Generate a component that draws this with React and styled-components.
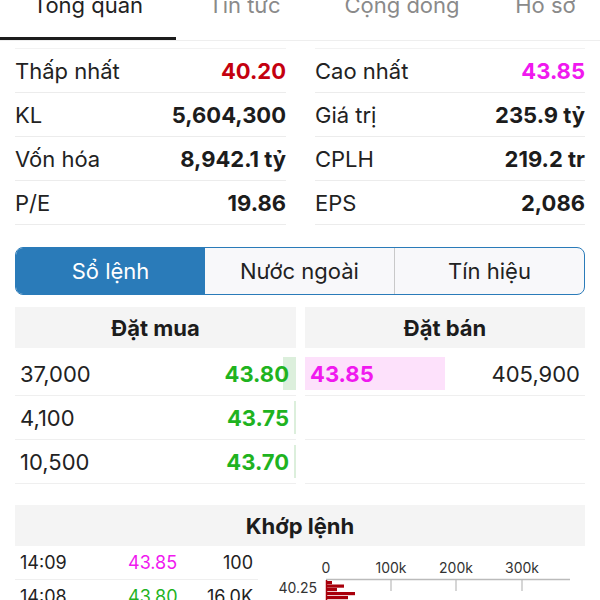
import React from 'react'
import styled, { createGlobalStyle } from 'styled-components'

const Global = createGlobalStyle`
  body { margin: 0; background: #fff; font-family: Inter, "Liberation Sans", sans-serif; color: #222; }
  * { box-sizing: border-box; }
`

const tabs = [
  { label: 'Tổng quan', w: 176, active: true },
  { label: 'Tin tức', w: 137 },
  { label: 'Cộng đồng', w: 178 },
  { label: 'Hồ sơ', w: 109 },
]

const stats = [
  [
    { k: 'Thấp nhất', v: '40.20', c: '#c4000f' },
    { k: 'KL', v: '5,604,300' },
    { k: 'Vốn hóa', v: '8,942.1 tỷ' },
    { k: 'P/E', v: '19.86' },
  ],
  [
    { k: 'Cao nhất', v: '43.85', c: '#f019ef' },
    { k: 'Giá trị', v: '235.9 tỷ' },
    { k: 'CPLH', v: '219.2 tr' },
    { k: 'EPS', v: '2,086' },
  ],
]

const bids = [
  { vol: '37,000', price: '43.80', bar: 13 },
  { vol: '4,100', price: '43.75', bar: 2 },
  { vol: '10,500', price: '43.70', bar: 2 },
]

const trades = [
  { t: '14:09', p: '43.85', c: '#f019ef', v: '100' },
  { t: '14:08', p: '43.80', c: '#1fb31f', v: '16.0K' },
]

// volume bars at 40.25 and below, widths in px on the 0..300k axis
const bars = [
  { y: 35, w: 6 },
  { y: 38.5, w: 18 },
  { y: 42, w: 11 },
  { y: 46, w: 29 },
  { y: 50, w: 22 },
]

export default function App() {
  return (
    <Page>
      <Global />
      <TabBar>
        {tabs.map(t => (
          <Tab key={t.label} $w={t.w} $active={t.active}>
            <TabLabel>{t.label}</TabLabel>
          </Tab>
        ))}
      </TabBar>

      <Stats>
        {stats.map((col, i) => (
          <StatCol key={i}>
            {col.map(r => (
              <StatRow key={r.k}>
                <span>{r.k}</span>
                <StatValue $c={r.c}>{r.v}</StatValue>
              </StatRow>
            ))}
          </StatCol>
        ))}
      </Stats>

      <Segment>
        <SegButton $active>Sổ lệnh</SegButton>
        <SegButton>Nước ngoài</SegButton>
        <SegButton $last>Tín hiệu</SegButton>
      </Segment>

      <Book>
        <BookCol>
          <BookHead>Đặt mua</BookHead>
          {bids.map(b => (
            <BookRow key={b.vol}>
              <Vol>{b.vol}</Vol>
              <BidPrice>{b.price}</BidPrice>
              <BidBar style={{ width: b.bar }} />
            </BookRow>
          ))}
        </BookCol>
        <BookCol>
          <BookHead>Đặt bán</BookHead>
          <BookRow>
            <AskPrice>43.85</AskPrice>
            <Vol $right>405,900</Vol>
          </BookRow>
          <BookRow />
          <BookRow />
        </BookCol>
      </Book>

      <Match>
        <BookHead>Khớp lệnh</BookHead>
        <MatchBody>
          <TradeList>
            {trades.map(t => (
              <TradeRow key={t.t}>
                <span>{t.t}</span>
                <TradePrice $c={t.c}>{t.p}</TradePrice>
                <TradeVol>{t.v}</TradeVol>
              </TradeRow>
            ))}
          </TradeList>
          <Chart width="327" height="60" viewBox="0 0 327 60">
            <g fontFamily="Inter, 'Liberation Sans', sans-serif" fontSize="14" fill="#333">
              <text x="68" y="27" textAnchor="middle">0</text>
              <text x="133" y="27" textAnchor="middle">100k</text>
              <text x="198" y="27" textAnchor="middle">200k</text>
              <text x="264" y="27" textAnchor="middle">300k</text>
              <text x="59" y="47" textAnchor="end">40.25</text>
            </g>
            <line x1="68" y1="33.5" x2="312" y2="33.5" stroke="#bbb" strokeWidth="1.5" />
            {[133, 198, 264].map(x => (
              <line key={x} x1={x} y1="33" x2={x} y2="45" stroke="#bbb" strokeWidth="1.2" />
            ))}
            <line x1="68.5" y1="34" x2="68.5" y2="60" stroke="#a8000b" strokeWidth="1.5" />
            <g fill="#a8000b">
              {bars.map(b => (
                <rect key={b.y} x="68" y={b.y} width={b.w} height="3.2" />
              ))}
            </g>
          </Chart>
        </MatchBody>
      </Match>
    </Page>
  )
}

const Page = styled.div`
  width: 600px;
  height: 600px;
  overflow: hidden;
`

const TabBar = styled.div`
  display: flex;
  height: 41px;
  border-bottom: 1px solid #eee;
`

const Tab = styled.div`
  flex: none;
  width: ${p => p.$w}px;
  height: ${p => (p.$active ? '40px' : '39px')};
  display: flex;
  justify-content: center;
  overflow: visible;
  color: ${p => (p.$active ? '#222' : '#8a8a8a')};
  border-bottom: ${p => (p.$active ? '3px solid #1c1c1c' : 'none')};
`

const TabLabel = styled.span`
  margin-top: -6px;
  font-size: 22px;
  line-height: 22px;
`

const Stats = styled.div`
  display: grid;
  grid-template-columns: 271px 270px;
  column-gap: 29px;
  padding: 0 15px;
  margin-top: 7px;
`

const StatCol = styled.div`
  border-top: 1px solid #f2f2f2;
`

const StatRow = styled.div`
  height: 44px;
  display: flex;
  align-items: center;
  justify-content: space-between;
  font-size: 22px;
  color: #222;
  border-bottom: 1px solid #ececec;
`

const StatValue = styled.span`
  font-weight: 700;
  color: ${p => p.$c || '#1c1c1c'};
`

const Segment = styled.div`
  display: flex;
  margin: 22px 15px 0;
  height: 48px;
  border: 1.5px solid #2a7bb9;
  border-radius: 8px;
  overflow: hidden;
  background: #f8f8fa;
`

const SegButton = styled.div`
  flex: 1;
  display: flex;
  align-items: center;
  justify-content: center;
  font-size: 22px;
  color: ${p => (p.$active ? '#fff' : '#222')};
  background: ${p => (p.$active ? '#2a7bb9' : 'transparent')};
  border-right: ${p => (p.$last || p.$active ? 'none' : '1px solid #c9c9c9')};
`

const Book = styled.div`
  display: grid;
  grid-template-columns: 281px 280px;
  column-gap: 9px;
  padding: 0 15px;
  margin-top: 12px;
`

const BookCol = styled.div`
  display: flex;
  flex-direction: column;
`

const BookHead = styled.div`
  height: 41px;
  margin-bottom: 4px;
  background: #f4f4f4;
  display: flex;
  align-items: center;
  justify-content: center;
  font-size: 22px;
  font-weight: 700;
  color: #1c1c1c;
`

const BookRow = styled.div`
  position: relative;
  height: 44px;
  display: flex;
  align-items: center;
  justify-content: space-between;
  border-bottom: 1px solid #efefef;
  font-size: 22px;
`

const Vol = styled.span`
  color: #222;
  padding: ${p => (p.$right ? '0 5px 0 0' : '0 0 0 5px')};
`

const BidPrice = styled.span`
  color: #1fb31f;
  font-weight: 700;
  padding-right: 7px;
  position: relative;
  z-index: 1;
`

const BidBar = styled.div`
  position: absolute;
  right: 0;
  top: 5px;
  bottom: 5px;
  background: #dcefdc;
`

const AskPrice = styled.span`
  width: 140px;
  align-self: stretch;
  margin: 5px 0;
  display: flex;
  align-items: center;
  padding-left: 5px;
  background: #fde1fb;
  color: #f019ef;
  font-weight: 700;
`

const Match = styled.div`
  margin: 21px 15px 0;
`

const MatchBody = styled.div`
  display: flex;
  margin-top: -4px;
`

const TradeList = styled.div`
  width: 243px;
  flex: none;
`

const TradeRow = styled.div`
  height: 34px;
  display: grid;
  grid-template-columns: 108px auto 1fr;
  align-items: center;
  padding: 0 5px;
  font-size: 18px;
  color: #222;
  border-bottom: 1px solid #efefef;
`

const TradePrice = styled.span`
  color: ${p => p.$c};
`

const TradeVol = styled.span`
  text-align: right;
`

const Chart = styled.svg`
  display: block;
  flex: none;
`
